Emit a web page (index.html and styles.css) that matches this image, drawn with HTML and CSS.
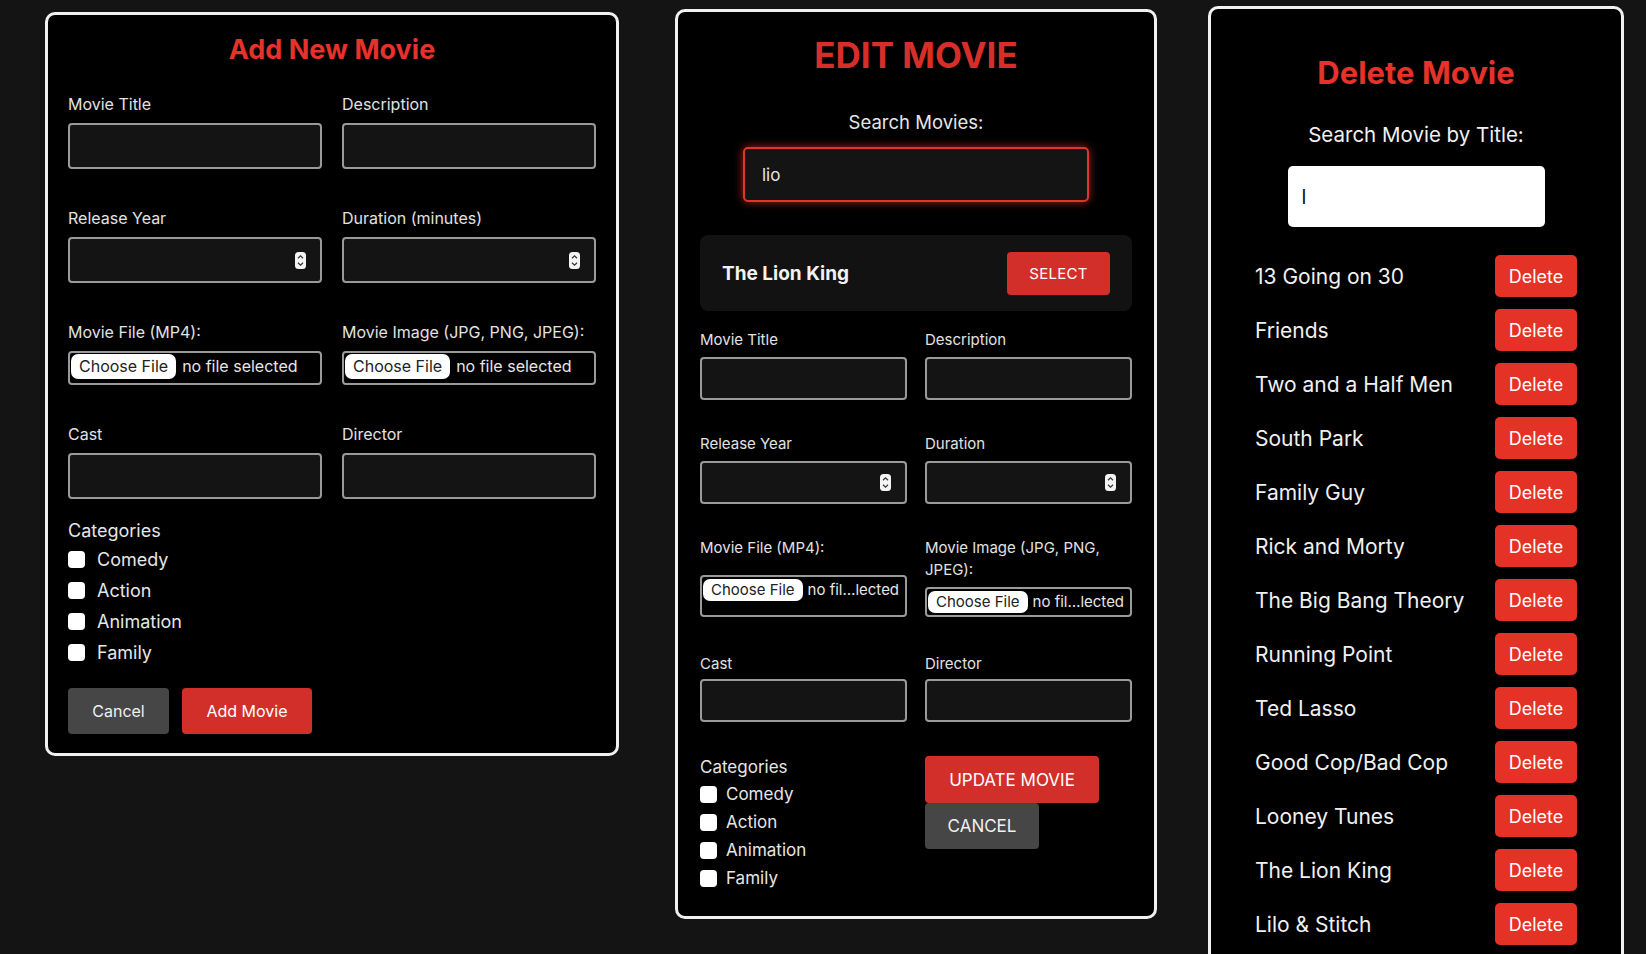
FILE: index.html
```html
<!DOCTYPE html>
<html lang="en">
<head>
<meta charset="utf-8">
<title>Movie Admin</title>
<link rel="stylesheet" href="styles.css">
</head>
<body>
<div class="page">

  <section class="panel panel-add">
    <h2 class="title title-add">Add New Movie</h2>
    <div class="grid grid-add">
      <div class="field"><span class="label">Movie Title</span><div class="input"></div></div>
      <div class="field"><span class="label">Description</span><div class="input"></div></div>
      <div class="field"><span class="label">Release Year</span><div class="input number"><span class="spin"><svg width="11" height="17" viewBox="0 0 11 17"><rect x="0" y="0" width="11" height="17" rx="3.5" fill="#f4f4f4"/><path d="M3 6.2 L5.5 3.8 L8 6.2" fill="none" stroke="#333" stroke-width="1.2"/><path d="M3 10.8 L5.5 13.2 L8 10.8" fill="none" stroke="#333" stroke-width="1.2"/></svg></span></div></div>
      <div class="field"><span class="label">Duration (minutes)</span><div class="input number"><span class="spin"><svg width="11" height="17" viewBox="0 0 11 17"><rect x="0" y="0" width="11" height="17" rx="3.5" fill="#f4f4f4"/><path d="M3 6.2 L5.5 3.8 L8 6.2" fill="none" stroke="#333" stroke-width="1.2"/><path d="M3 10.8 L5.5 13.2 L8 10.8" fill="none" stroke="#333" stroke-width="1.2"/></svg></span></div></div>
      <div class="field"><span class="label">Movie File (MP4):</span><div class="file"><span class="file-btn">Choose File</span><span class="file-text">no file selected</span></div></div>
      <div class="field"><span class="label">Movie Image (JPG, PNG, JPEG):</span><div class="file"><span class="file-btn">Choose File</span><span class="file-text">no file selected</span></div></div>
      <div class="field"><span class="label">Cast</span><div class="input"></div></div>
      <div class="field"><span class="label">Director</span><div class="input"></div></div>
    </div>
    <div class="cats cats-add">
      <div class="cats-title">Categories</div>
      <ul class="cat-list">
        <li class="cat"><span class="box"></span>Comedy</li>
        <li class="cat"><span class="box"></span>Action</li>
        <li class="cat"><span class="box"></span>Animation</li>
        <li class="cat"><span class="box"></span>Family</li>
      </ul>
    </div>
    <div class="actions-add">
      <button class="btn btn-grey">Cancel</button>
      <button class="btn btn-red">Add Movie</button>
    </div>
  </section>

  <section class="panel panel-edit">
    <h2 class="title title-edit">EDIT MOVIE</h2>
    <div class="search-label">Search Movies:</div>
    <div class="search-box">lio</div>
    <div class="result-card">
      <span class="result-name">The Lion King</span>
      <button class="btn btn-red btn-select">SELECT</button>
    </div>
    <div class="grid grid-edit">
      <div class="field"><span class="label">Movie Title</span><div class="input"></div></div>
      <div class="field"><span class="label">Description</span><div class="input"></div></div>
      <div class="field"><span class="label">Release Year</span><div class="input number"><span class="spin"><svg width="11" height="17" viewBox="0 0 11 17"><rect x="0" y="0" width="11" height="17" rx="3.5" fill="#f4f4f4"/><path d="M3 6.2 L5.5 3.8 L8 6.2" fill="none" stroke="#333" stroke-width="1.2"/><path d="M3 10.8 L5.5 13.2 L8 10.8" fill="none" stroke="#333" stroke-width="1.2"/></svg></span></div></div>
      <div class="field"><span class="label">Duration</span><div class="input number"><span class="spin"><svg width="11" height="17" viewBox="0 0 11 17"><rect x="0" y="0" width="11" height="17" rx="3.5" fill="#f4f4f4"/><path d="M3 6.2 L5.5 3.8 L8 6.2" fill="none" stroke="#333" stroke-width="1.2"/><path d="M3 10.8 L5.5 13.2 L8 10.8" fill="none" stroke="#333" stroke-width="1.2"/></svg></span></div></div>
      <div class="field"><span class="label">Movie File (MP4):</span><div class="file file-tall"><span class="file-btn">Choose File</span><span class="file-text">no fil…lected</span></div></div>
      <div class="field"><span class="label">Movie Image (JPG, PNG, JPEG):</span><div class="file file-short"><span class="file-btn">Choose File</span><span class="file-text">no fil…lected</span></div></div>
      <div class="field field-cast"><span class="label">Cast</span><div class="input"></div></div>
      <div class="field field-cast"><span class="label">Director</span><div class="input"></div></div>
    </div>
    <div class="edit-bottom">
      <div class="cats cats-edit">
        <div class="cats-title">Categories</div>
        <ul class="cat-list">
          <li class="cat"><span class="box"></span>Comedy</li>
          <li class="cat"><span class="box"></span>Action</li>
          <li class="cat"><span class="box"></span>Animation</li>
          <li class="cat"><span class="box"></span>Family</li>
        </ul>
      </div>
      <div class="edit-actions">
        <button class="btn btn-red btn-update">UPDATE MOVIE</button>
        <button class="btn btn-grey btn-cancel-edit">CANCEL</button>
      </div>
    </div>
  </section>

  <section class="panel panel-del">
    <h2 class="title title-del">Delete Movie</h2>
    <div class="del-label">Search Movie by Title:</div>
    <div class="del-search">l</div>
    <ul class="del-list">
      <li class="del-row"><span>13 Going on 30</span><button class="btn-del">Delete</button></li>
      <li class="del-row"><span>Friends</span><button class="btn-del">Delete</button></li>
      <li class="del-row"><span>Two and a Half Men</span><button class="btn-del">Delete</button></li>
      <li class="del-row"><span>South Park</span><button class="btn-del">Delete</button></li>
      <li class="del-row"><span>Family Guy</span><button class="btn-del">Delete</button></li>
      <li class="del-row"><span>Rick and Morty</span><button class="btn-del">Delete</button></li>
      <li class="del-row"><span>The Big Bang Theory</span><button class="btn-del">Delete</button></li>
      <li class="del-row"><span>Running Point</span><button class="btn-del">Delete</button></li>
      <li class="del-row"><span>Ted Lasso</span><button class="btn-del">Delete</button></li>
      <li class="del-row"><span>Good Cop/Bad Cop</span><button class="btn-del">Delete</button></li>
      <li class="del-row"><span>Looney Tunes</span><button class="btn-del">Delete</button></li>
      <li class="del-row"><span>The Lion King</span><button class="btn-del">Delete</button></li>
      <li class="del-row"><span>Lilo &amp; Stitch</span><button class="btn-del">Delete</button></li>
    </ul>
  </section>

</div>
</body>
</html>
```

FILE: styles.css
```css
* { box-sizing: border-box; }

html, body {
  margin: 0;
  padding: 0;
  background: #141414;
  height: 954px;
  overflow: hidden;
}

body {
  font-family: Inter, "Noto Sans", "Liberation Sans", sans-serif;
  color: #e6e6e6;
}

.page {
  display: flex;
  align-items: flex-start;
  padding-left: 45px;
}

.panel {
  background: #000;
  border: 3px solid #f1f1f1;
  border-radius: 10px;
}

.title {
  margin: 0;
  text-align: center;
  font-weight: 700;
}

.label {
  display: block;
  color: #e2e2e2;
}

.input {
  background: #141414;
  border: 2px solid #9a9a9a;
  border-radius: 4px;
}

.input.number {
  display: flex;
  align-items: center;
  justify-content: flex-end;
  padding-right: 14px;
}

.spin {
  display: flex;
}

.file {
  display: flex;
  align-items: flex-start;
  border: 2px solid #9a9a9a;
  border-radius: 4px;
  padding: 1px 0 0 1px;
  color: #e6e6e6;
}

.file-btn {
  background: #fff;
  color: #222;
  border-radius: 7px;
  white-space: nowrap;
}

.file-text {
  white-space: nowrap;
}

.btn {
  border: none;
  border-radius: 4px;
  color: #fff;
  font-family: inherit;
  cursor: pointer;
}

.btn-red { background: #d32f2a; }
.btn-grey { background: #464646; color: #f0f0f0; }

.cat-list {
  list-style: none;
  margin: 0;
  padding: 0;
}

.cat {
  display: flex;
  align-items: center;
}

.box {
  display: inline-block;
  background: #fff;
  border-radius: 4px;
  flex: none;
}

/* ---------- Add panel ---------- */
.panel-add {
  width: 574px;
  margin-top: 12px;
  padding: 18px 20px 19px;
}

.title-add {
  font-size: 27px;
  line-height: 34px;
  color: #e5322a;
  margin-bottom: 27px;
}

.grid-add {
  display: grid;
  grid-template-columns: 254px 254px;
  column-gap: 20px;
  row-gap: 39px;
}

.grid-add .label {
  font-size: 16px;
  line-height: 20px;
  margin-bottom: 9px;
}

.grid-add .input { height: 46px; }

.grid-add .file {
  height: 34px;
  font-size: 16px;
}

.grid-add .file-btn {
  padding: 2px 8px 3px;
  margin-right: 6px;
  line-height: 20px;
}

.grid-add .file-text { line-height: 25px; }

.cats-add { margin-top: 21px; }

.cats-add .cats-title {
  font-size: 18px;
  line-height: 22px;
}

.cats-add .cat-list { margin-top: 2px; }

.cats-add .cat {
  height: 31px;
  font-size: 18px;
}

.cats-add .box {
  width: 17px;
  height: 17px;
  margin-right: 12px;
}

.actions-add {
  display: flex;
  gap: 13px;
  margin-top: 20px;
}

.actions-add .btn {
  height: 46px;
  font-size: 16px;
}

.actions-add .btn-grey { width: 101px; }
.actions-add .btn-red { width: 130px; }

/* ---------- Edit panel ---------- */
.panel-edit {
  width: 482px;
  margin-left: 56px;
  margin-top: 9px;
  padding: 23px 22px 24px;
}

.title-edit {
  font-size: 35px;
  line-height: 40px;
  color: #d72f28;
  margin-bottom: 36px;
}

.search-label {
  text-align: center;
  font-size: 18.5px;
  line-height: 22px;
  color: #e6e6e6;
}

.search-box {
  width: 346px;
  height: 55px;
  margin: 14px auto 0;
  background: #141414;
  border: 2px solid #e0342c;
  border-radius: 5px;
  box-shadow: 0 0 10px rgba(229, 50, 40, 0.7);
  padding-left: 17px;
  display: flex;
  align-items: center;
  font-size: 17px;
  color: #e6e6e6;
}

.result-card {
  margin-top: 33px;
  height: 76px;
  background: #121212;
  border-radius: 8px;
  display: flex;
  align-items: center;
  justify-content: space-between;
  padding: 0 22px 0 22px;
}

.result-name {
  font-size: 19px;
  font-weight: 700;
  color: #f2f2f2;
}

.btn-select {
  width: 103px;
  height: 43px;
  font-size: 15px;
  letter-spacing: 0.3px;
}

.grid-edit {
  display: grid;
  grid-template-columns: 207px 207px;
  column-gap: 18px;
  row-gap: 33px;
  margin-top: 18px;
}

.grid-edit .field {
  display: flex;
  flex-direction: column;
}

.grid-edit .label {
  font-size: 15px;
  line-height: 22px;
  margin-bottom: 6px;
}

.grid-edit .field-cast { margin-top: 3px; }
.grid-edit .field-cast .label { margin-bottom: 4px; }

.grid-edit .input { height: 43px; }

.grid-edit .file {
  font-size: 15px;
  padding: 2px 0 0 1px;
}

.grid-edit .file-btn {
  padding: 1px 8px 2px;
  margin-right: 5px;
  line-height: 19px;
}

.grid-edit .file-text { line-height: 22px; }

.file-tall {
  height: 42px;
  margin-top: auto;
}

.file-short { height: 30px; }

.edit-bottom {
  display: grid;
  grid-template-columns: 207px 207px;
  column-gap: 18px;
  margin-top: 34px;
}

.cats-edit .cats-title {
  font-size: 17px;
  line-height: 22px;
}

.cats-edit .cat-list { margin-top: 2px; }

.cats-edit .cat {
  height: 28px;
  font-size: 17px;
}

.cats-edit .box {
  width: 17px;
  height: 17px;
  margin-right: 9px;
}

.edit-actions {
  display: flex;
  flex-direction: column;
  align-items: flex-start;
}

.btn-update {
  width: 174px;
  height: 47px;
  font-size: 17px;
}

.btn-cancel-edit {
  width: 114px;
  height: 46px;
  font-size: 17px;
}

/* ---------- Delete panel ---------- */
.panel-del {
  width: 416px;
  margin-left: 51px;
  margin-top: 6px;
  padding: 45px 44px 40px;
}

.title-del {
  font-size: 31px;
  line-height: 37px;
  color: #e5322a;
}

.del-label {
  margin-top: 31px;
  text-align: center;
  font-size: 20.5px;
  line-height: 25px;
  color: #f0f0f0;
}

.del-search {
  width: 257px;
  height: 61px;
  margin: 19px auto 0;
  background: #fff;
  border-radius: 5px;
  color: #111;
  font-size: 20px;
  display: flex;
  align-items: center;
  padding-left: 14px;
}

.del-list {
  list-style: none;
  margin: 28px 0 0;
  padding: 0;
  display: flex;
  flex-direction: column;
  gap: 12px;
}

.del-row {
  display: flex;
  align-items: center;
  justify-content: space-between;
  height: 42px;
  font-size: 21px;
  color: #f0f0f0;
}

.btn-del {
  width: 82px;
  height: 42px;
  border: none;
  border-radius: 5px;
  background: #e53226;
  color: #fff;
  font-family: inherit;
  font-size: 18px;
}
```
